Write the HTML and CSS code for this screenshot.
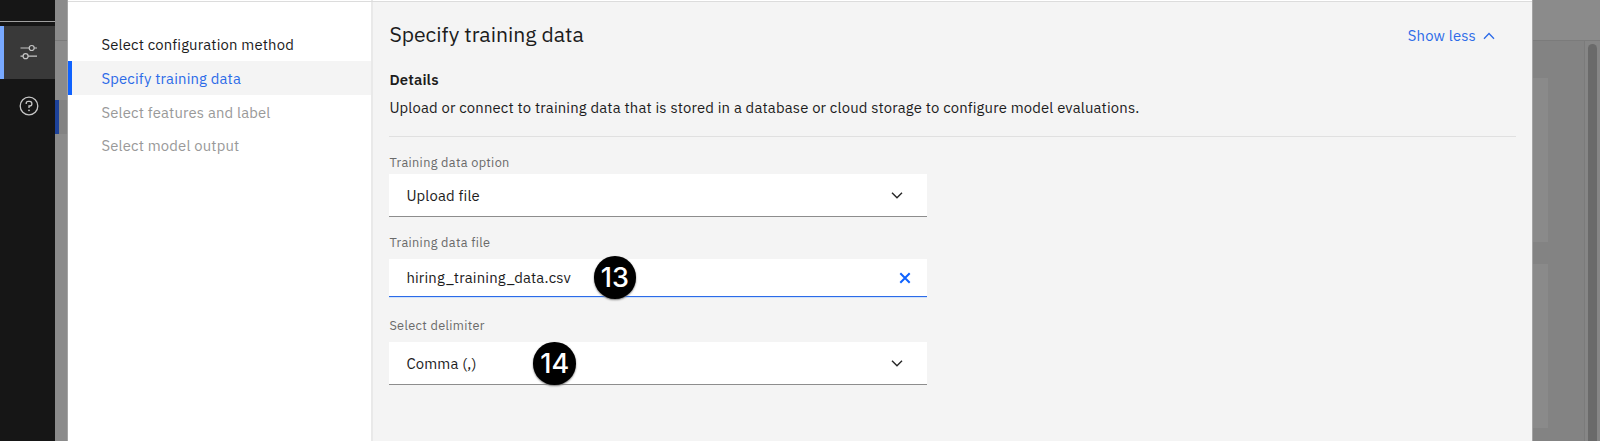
FILE: index.html
```html
<!DOCTYPE html>
<html lang="en">
<head>
<meta charset="utf-8">
<title>Specify training data</title>
<link rel="stylesheet" href="styles.css">
</head>
<body>
<div class="app">
  <aside class="rail">
    <div class="rail-top"></div>
    <a class="rail-item active">
      <svg width="18" height="16" viewBox="0 0 18 16" fill="none" stroke="#c6c6c6" stroke-width="1.2"><path d="M0.5 4h8.8M14.2 4h2.8M0.5 12.2h2.6M8 12.2h9"/><circle cx="11.7" cy="4" r="2.5"/><circle cx="5.6" cy="12.2" r="2.5"/></svg>
    </a>
    <a class="rail-item">
      <svg width="20" height="20" viewBox="0 0 20 20" fill="none" stroke="#c6c6c6" stroke-width="1.3"><circle cx="10" cy="10" r="8.8"/><path d="M7.2 7.9v-.5a2 2 0 0 1 2-2h1.4a2.2 2.2 0 0 1 0 4.6H10v2"/><circle cx="10" cy="14.3" r=".9" fill="#c6c6c6" stroke="none"/></svg>
    </a>
  </aside>
  <div class="page">
    <div class="page-head"></div>
    <div class="page-body">
      <div class="page-nav"><div class="page-nav-item"></div></div>
      <div class="page-tiles"><div class="tile"></div><div class="tile"></div></div>
      <div class="scroll-track"><div class="scroll-thumb"></div></div>
    </div>
  </div>
  <section class="modal">
    <nav class="steps">
      <a class="step">Select configuration method</a>
      <a class="step current">Specify training data</a>
      <a class="step disabled">Select features and label</a>
      <a class="step disabled last">Select model output</a>
    </nav>
    <main class="content">
      <header class="content-head">
        <h1 class="title">Specify training data</h1>
        <a class="toggle"><span>Show less</span>
          <svg width="12" height="8" viewBox="0 0 12 8" fill="none" stroke="#2c6be8" stroke-width="1.3"><path d="M1 6.8L6 1.5l5 5.3"/></svg>
        </a>
      </header>
      <h2 class="details">Details</h2>
      <p class="description">Upload or connect to training data that is stored in a database or cloud storage to configure model evaluations.</p>
      <div class="field option-field">
        <label class="label">Training data option</label>
        <div class="select"><span>Upload file</span>
          <svg width="12" height="8" viewBox="0 0 12 8" fill="none" stroke="#262626" stroke-width="1.4"><path d="M1 1.7l5 5 5-5"/></svg>
        </div>
      </div>
      <div class="field file-field">
        <label class="label">Training data file</label>
        <div class="select file"><span>hiring_training_data.csv</span>
          <svg width="12" height="12" viewBox="0 0 12 12" fill="none" stroke="#0f62fe" stroke-width="2"><path d="M1.3 1.3l9.4 9.4M10.7 1.3l-9.4 9.4"/></svg>
          <span class="badge b13">13</span>
        </div>
      </div>
      <div class="field delimiter-field">
        <label class="label">Select delimiter</label>
        <div class="select"><span>Comma (,)</span>
          <svg width="12" height="8" viewBox="0 0 12 8" fill="none" stroke="#262626" stroke-width="1.4"><path d="M1 1.7l5 5 5-5"/></svg>
          <span class="badge b14">14</span>
        </div>
      </div>
    </main>
  </section>
</div>
</body>
</html>
```
FILE: styles.css
```css
* { box-sizing: border-box; }
body { margin: 0; overflow: hidden; font-family: "IBM Plex Sans", Roboto, sans-serif; font-size: 14.84px; letter-spacing: .165px; color: #1c1c1c; }
svg { display: block; flex: none; }
.app { position: relative; display: flex; width: 1600px; height: 441px; overflow: hidden; }
.rail { width: 55px; background: #161616; display: flex; flex-direction: column; }
.rail-top { height: 22px; border-bottom: 1px solid #a0a0a0; margin-bottom: 4px; }
.rail-item { height: 53px; display: flex; align-items: center; justify-content: center; padding-left: 2px; }
.rail-item.active { background: #393939; border-left: 4px solid #78a9ff; padding: 0 2px 1px 0; }
.page { flex: 1; display: flex; flex-direction: column; background: #838383; }
.page-head { height: 41px; background: #8b8b8b; border-bottom: 1px solid #7b7b7b; }
.page-body { flex: 1; display: flex; }
.page-nav { width: 40px; background: #8b8b8b; padding-top: 59px; }
.page-nav-item { height: 34px; background: #838383; border-left: 4px solid #1d429a; }
.page-tiles { flex: 1; display: flex; flex-direction: column; gap: 22px; padding: 37px 36px 0 0; border-right: 1px solid #7b7b7b; }
.tile { height: 164px; background: #8a8a8a; }
.scroll-track { width: 15px; padding: 3px 3px 0; background: #868686; display: flex; }
.scroll-thumb { flex: 1; background: #6a6a6a; border-radius: 5px 5px 0 0; }
.modal { position: absolute; left: 68px; top: 0; width: 1464px; height: 441px; display: flex; background: #fff; box-shadow: 0 0 0 1px #a4a4a4; }
.modal::before { content: ""; position: absolute; left: 0; right: 0; top: 1px; height: 1px; background: #dcdcdc; }
.steps { width: 305px; padding-top: 27px; border-right: 2px solid #e9e9e9; }
.step { display: block; height: 34px; line-height: 35px; padding-left: 33.5px; white-space: nowrap; }
.step.current { background: #f4f4f4; color: #2c6be8; border-left: 4px solid #0f62fe; padding-left: 29.5px; }
.step.disabled { color: #999; }
.step.last { line-height: 33px; }
.content { flex: 1; margin-top: 2px; padding: 14px 16px 0 16.4px; background: #f4f4f4; }
.content-head { display: flex; align-items: center; justify-content: space-between; height: 36px; }
.title { margin: 0; font-size: 21.2px; letter-spacing: 0; line-height: 35px; font-weight: 400; white-space: nowrap; }
.toggle { display: flex; align-items: center; gap: 6.5px; padding: 3px 21.5px 0 0; color: #2c6be8; white-space: nowrap; }
.details { margin: 16px 0 0; font-size: 14.84px; line-height: 23px; font-weight: 600; }
.description { margin: 4px 0 0; line-height: 25px; height: 42px; border-bottom: 1px solid #e0e0e0; white-space: nowrap; }
.field { width: 537.6px; }
.label { display: block; line-height: 16px; font-size: 12.72px; letter-spacing: .34px; color: #6a6a6a; white-space: nowrap; }
.option-field .label { height: 37px; padding-top: 17px; }
.file-field .label { height: 42px; padding-top: 17px; }
.delimiter-field .label { height: 45px; padding-top: 20px; }
.select { position: relative; height: 43px; display: flex; align-items: center; justify-content: space-between; padding: 0 24px 0 17px; background: #fff; border-bottom: 1px solid #8d8d8d; white-space: nowrap; }
.select.file { height: 38px; padding-right: 16.2px; border-bottom: 1px solid #2c6be8; box-shadow: 0 1px #d0e2fb; }
.badge { position: absolute; width: 42.5px; height: 42.5px; border-radius: 50%; background: #000; color: #fff; font: 500 27px/43px Inter, "Liberation Sans", sans-serif; letter-spacing: 0; text-align: center; box-shadow: 0 1px 2px #777; }
.b13 { left: 204.2px; top: -3px; }
.b14 { left: 144px; top: 0; }
```
